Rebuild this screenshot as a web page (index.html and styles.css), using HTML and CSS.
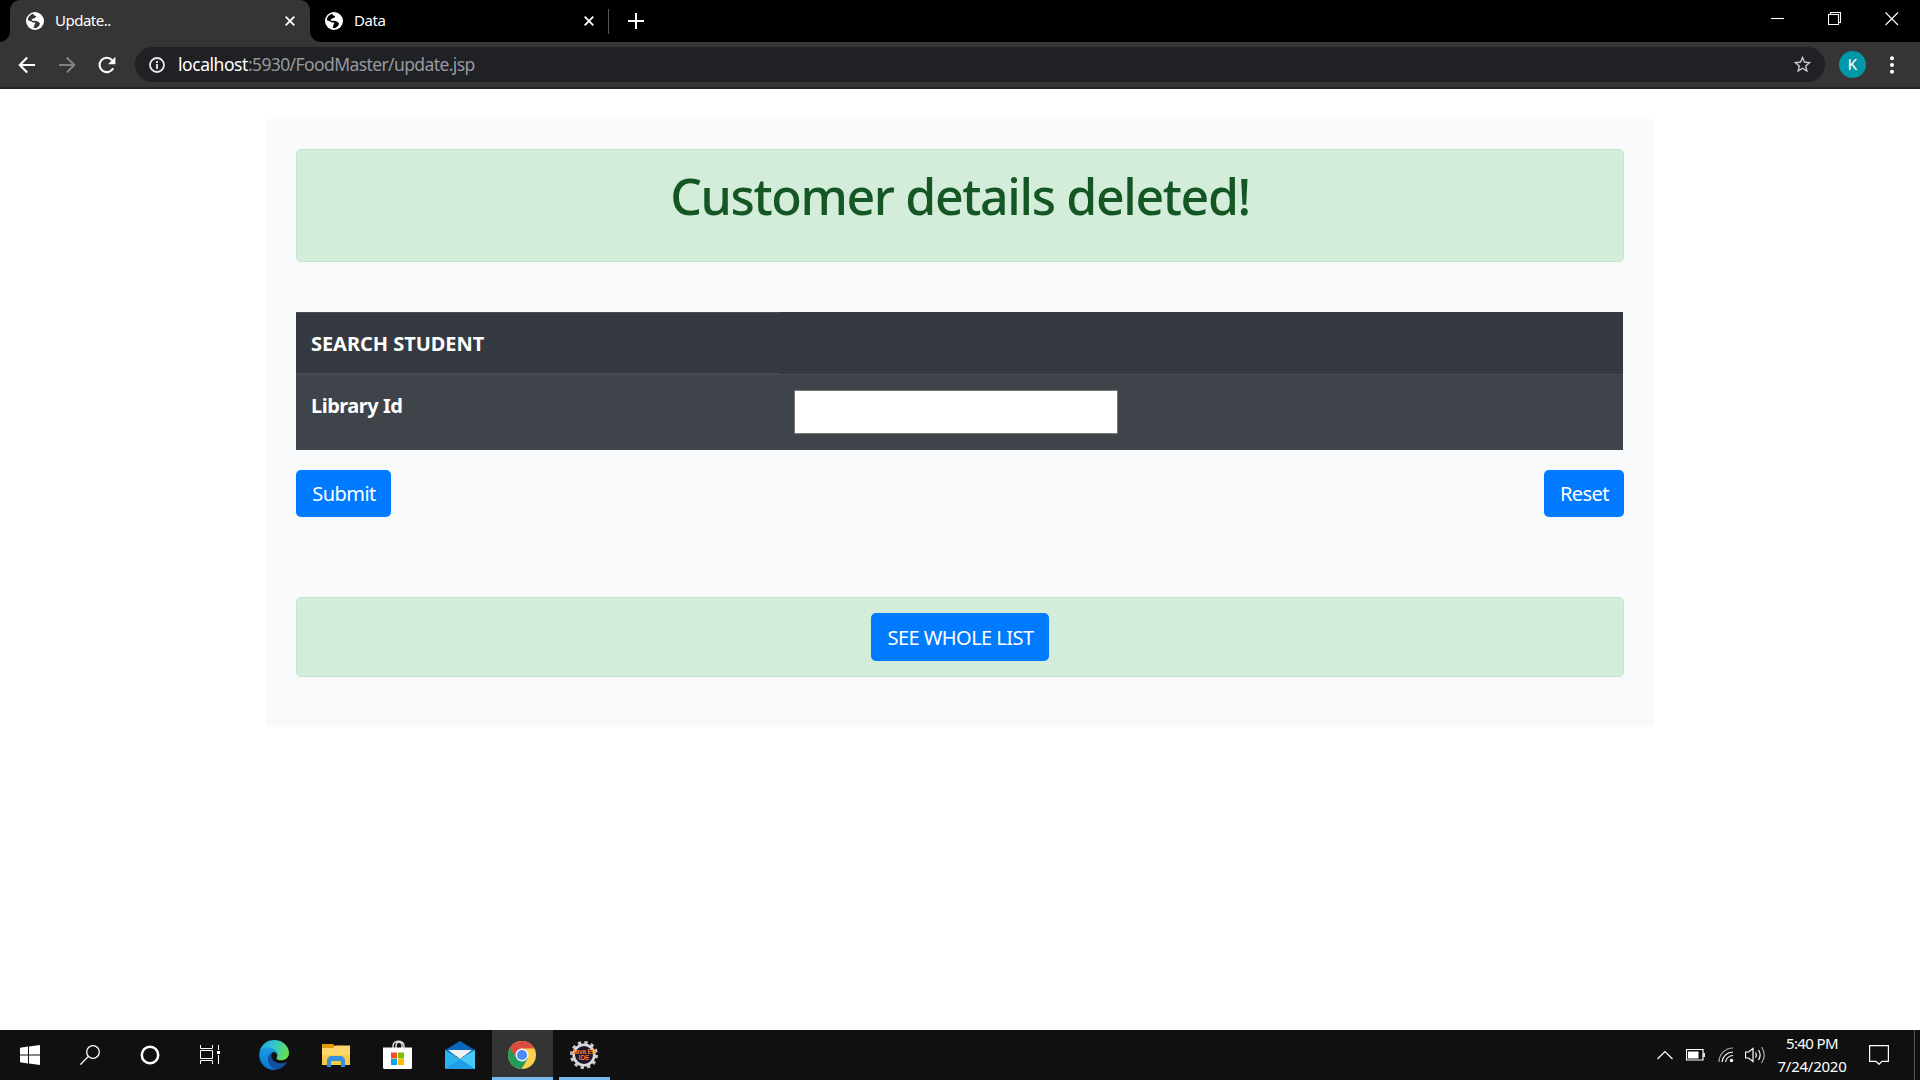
FILE: index.html
```html
<!DOCTYPE html>
<html lang="en">
<head>
<meta charset="utf-8">
<title>Update..</title>
<link rel="stylesheet" href="styles.css">
</head>
<body>
<header class="browser">
  <div class="tabs">
    <div class="tab tab-active">
      <svg class="globe" viewBox="0 0 18 18"><circle cx="9" cy="9" r="9" fill="#fff"/><path d="M7 1.8C4.2 2.6 1.9 5 1.8 8.3L5 9.2 6.8 10.4 9.5 10.5 8.6 12.6 7.6 16 10.4 16.1 13 14 14 11.5 12.4 9.8 9.4 8.7 7.2 9 5.4 8 6.6 6.7 9.4 5.8 10.2 4.2 8.4 3.4z" fill="#353535"/></svg>
      <span class="tab-title"><span class="t-update">Update..</span></span>
      <svg class="tab-close" viewBox="0 0 10 10"><path d="M.7.7l8.6 8.6M9.3.7L.7 9.3"/></svg>
    </div>
    <div class="tab tab-idle">
      <svg class="globe" viewBox="0 0 18 18"><circle cx="9" cy="9" r="9" fill="#fff"/><path d="M7 1.8C4.2 2.6 1.9 5 1.8 8.3L5 9.2 6.8 10.4 9.5 10.5 8.6 12.6 7.6 16 10.4 16.1 13 14 14 11.5 12.4 9.8 9.4 8.7 7.2 9 5.4 8 6.6 6.7 9.4 5.8 10.2 4.2 8.4 3.4z" fill="#000"/></svg>
      <span class="tab-title"><span class="t-data">Data</span></span>
      <svg class="tab-close" viewBox="0 0 10 10"><path d="M.7.7l8.6 8.6M9.3.7L.7 9.3"/></svg>
    </div>
    <svg class="new-tab" viewBox="0 0 16 16"><path d="M8 0v16M0 8h16"/></svg>
    <div class="window-controls">
      <svg viewBox="0 0 14 14"><path d="M0 6.5h13"/></svg>
      <svg viewBox="0 0 14 14"><path d="M.5 2.5h10v10H.5zM2.5 2.5v-2h10v10h-2"/></svg>
      <svg viewBox="0 0 14 14"><path d="M.5.5l12.5 12.5M13 .5L.5 13"/></svg>
    </div>
  </div>
  <div class="toolbar">
    <svg class="nav" viewBox="0 0 18 18"><path d="M17 9H2M9.2 1.6L1.8 9l7.4 7.4"/></svg>
    <svg class="nav nav-off" viewBox="0 0 18 18"><path d="M1 9h15M8.8 1.6L16.2 9l-7.4 7.4"/></svg>
    <svg class="nav" viewBox="0 0 18 18"><path d="M15.2 12.2A7.2 7.2 0 1 1 14.2 4.2"/><path d="M17.4.8v7.4H10z" fill="#fff" stroke="none"/></svg>
    <div class="omnibox">
      <svg class="info" viewBox="0 0 16 16"><circle cx="8" cy="8" r="7"/><path d="M8 7v5M8 4v1.9"/></svg>
      <span class="url"><b>localhost</b>:5930/FoodMaster/update.jsp</span>
      <svg class="star" viewBox="0 0 24 24"><path d="M22 9.24l-7.19-.62L12 2 9.19 8.63 2 9.24l5.46 4.73L5.82 21 12 17.27 18.18 21l-1.63-7.03L22 9.24zM12 15.4l-3.76 2.27 1-4.28-3.32-2.88 4.38-.38L12 6.1l1.71 4.04 4.38.38-3.32 2.88 1 4.28L12 15.4z"/></svg>
    </div>
    <span class="avatar">K</span>
    <svg class="dots" viewBox="0 0 4 18"><circle cx="2" cy="2.3" r="2"/><circle cx="2" cy="9" r="2"/><circle cx="2" cy="15.7" r="2"/></svg>
  </div>
</header>

<main class="page">
  <section class="panel">
    <div class="alert alert-message"><h1 class="heading">Customer details deleted!</h1></div>
    <form class="search">
      <table class="table">
        <thead><tr><th><span class="t-search">SEARCH STUDENT</span></th><td></td></tr></thead>
        <tbody><tr><th><span class="t-library">Library Id</span></th><td><input class="field" type="text"></td></tr></tbody>
      </table>
      <div class="actions">
        <button class="btn submit" type="button">Submit</button>
        <button class="btn reset" type="button">Reset</button>
      </div>
    </form>
    <div class="alert alert-list"><a class="btn whole">SEE WHOLE LIST</a></div>
  </section>
</main>

<footer class="taskbar">
  <div class="shell">
    <div class="task"><svg width="20" height="20" viewBox="0 0 20 20" fill="#fff"><path d="M0 2.8L8 1.6V9.4H0zM9 1.5L20 0V9.4H9zM0 10.4h8v8L0 17.2zM9 10.4h11V20L9 18.5z"/></svg></div>
    <div class="task"><svg width="20" height="20" viewBox="0 0 20 20" fill="none" stroke="#fff" stroke-width="1.3"><circle cx="13" cy="7" r="6.3"/><path d="M8.4 11.4L.4 19.6"/></svg></div>
    <div class="task"><svg width="20" height="20" viewBox="0 0 20 20" fill="none" stroke="#fff" stroke-width="2.5"><circle cx="10" cy="10" r="8.2"/></svg></div>
    <div class="task"><svg width="20" height="20" viewBox="0 0 20 20" fill="none" stroke="#fff"><path d="M.5 0v3.5h12V0M.5 5.5h12v8H.5zM.5 19v-3.5h12V19M18.5 0v5M18.5 10v9"/><path d="M17 6h3v3h-3z" fill="#fff" stroke="none"/></svg></div>
  </div>
  <div class="apps">
    <div class="task"><svg width="30" height="30" viewBox="0 0 30 30">
      <defs><linearGradient id="e1" x1="0" x2="1" y1=".2" y2=".5"><stop offset="0" stop-color="#1ca7e0"/><stop offset=".5" stop-color="#36c8c9"/><stop offset="1" stop-color="#67df4d"/></linearGradient><linearGradient id="e2" x1="0" x2="0" y1="0" y2="1"><stop offset="0" stop-color="#1b9de2"/><stop offset="1" stop-color="#0876cf"/></linearGradient></defs>
      <path d="M.5 12C2 4.5 8 0 15 0c9 0 15 6.2 15 13 0 4.5-3.5 7.3-7.5 7.3-3.2 0-5-1.2-5-2.1 0-.7.9-1.4.9-3.2C18.4 11.5 14 8 9 8 5 8 2 9.5.5 12z" fill="url(#e1)"/>
      <path d="M.2 14.5C.3 10 4.5 7.5 9 7.5c5 0 9.4 3.5 9.4 7.3-1-2-2.3-2.8-4-2.8-3.6 1.5-5.700 5-4.600 9.500 1 4 4.200 7 8.200 8.100C8.500 31.600.2 24.500.2 14.500z" fill="url(#e2)"/>
      <path d="M14 12c-3.800 1.500-5.800 5-4.700 9.500 1 4 4.700 7.300 8.700 8.100 4-.8 7.500-3.400 9.500-6.600.3-.7-.2-1-.8-.7-7 3-14.300-1-14.300-6.300 0-1.600.6-3 1.600-4z" fill="#11509f"/></svg></div>
    <div class="task task-files"><svg width="28" height="24" viewBox="0 0 28 24"><path d="M0 1h11l2 2v4H0z" fill="#dd9b08"/><path d="M0 5h11l2.500-2.500H28V22H0z" fill="#ffd768"/><path d="M0 12h28v10H0z" fill="#fbc949"/><path d="M5 24V16l3-3h12l3 3v8h-4v-6H9v6z" fill="#3991dd"/></svg></div>
    <div class="task task-store"><svg width="29" height="30" viewBox="0 0 29 30"><path d="M10 8V6c0-6.500 11-6.500 11 0v2M13 8V5.500c0-4.500 6-4.500 6 0V8" fill="none" stroke="#d8d8d8" stroke-width="1.500"/><path d="M0 7.500h29V28l-1 1H1l-1-1z" fill="#fff"/><path d="M8 12.500h6v6H8z" fill="#f25022"/><path d="M15 12.500h6v6h-6z" fill="#7fba00"/><path d="M8 19h6v6H8z" fill="#00a4ef"/><path d="M15 19h6v6h-6z" fill="#ffb900"/></svg></div>
    <div class="task"><svg width="30" height="28" viewBox="0 0 30 28"><path d="M0 9L15 0l15 9v6H0z" fill="#0867b9"/><path d="M0 9l15 9 15-9v19H0z" fill="#29b4ee"/><path d="M3 9h24l-12 9z" fill="#f2f2f2"/><path d="M30 9v19L15 18z" fill="#4bc9f5"/><path d="M0 28L15 18l15 10z" fill="#209eea"/></svg></div>
    <div class="task task-current"><svg width="28" height="28" viewBox="0 0 28 28"><circle cx="14" cy="14" r="14" fill="#ffd04b"/><path d="M14 14L1.900 7A14 14 0 0 0 13.500 28l6.300-10.500z" fill="#229b5b"/><path d="M1.900 7A14 14 0 0 1 26.300 7.500H14a6.500 6.500 0 0 0-6 8.500z" fill="#dc4c3e"/><circle cx="14" cy="14" r="6.500" fill="#f5f5f5"/><circle cx="14" cy="14" r="5.100" fill="#4f8bf5"/></svg></div>
    <div class="task task-open"><svg width="30" height="28" viewBox="-15 -14 30 28"><circle r="12.500" fill="none" stroke="#c9c9c9" stroke-width="3" stroke-dasharray="3.300 3.245"/><circle r="10.300" fill="#1b1730" stroke="#dadada" stroke-width="2.600"/><g font-family="Liberation Sans" font-size="6.500" font-weight="700" fill="#ef7d19" text-anchor="middle"><text y="-1" textLength="24">Java EE</text><text y="5.200">IDE</text></g></svg></div>
  </div>
  <div class="tray">
    <svg width="16" height="10" viewBox="0 0 16 10"><path d="M.5 9L8 1.500 15.500 9"/></svg>
    <svg width="19" height="12" viewBox="0 0 19 12"><path d="M.5.5h16.500v10.500H.5zM18.300 4v4"/><path d="M2 2.500h10.500v7H2z" fill="#fff" stroke="none"/></svg>
    <svg width="16" height="16" viewBox="0 0 16 16"><path d="M1 15A14 14 0 0 1 15 1" opacity=".65"/><path d="M4 15A11 11 0 0 1 15 5M7.500 15A8 8 0 0 1 15 8.500"/><circle cx="13.500" cy="13.500" r="1.700" fill="#fff" stroke="none"/></svg>
    <svg width="21" height="18" viewBox="0 0 21 18"><path d="M.5 6h3L8 2.500v13L3.500 12h-3zM10.500 6.500q1.600 2.500 0 5M13.500 4q3.300 5 0 10"/><path d="M16.500 1q5.500 8 0 16" opacity=".65"/></svg>
    <div class="clock"><span class="t-time">5:40 PM</span><span class="t-date">7/24/2020</span></div>
    <svg class="notice" width="20" height="20" viewBox="0 0 20 20"><path d="M.6.6h18.800v15.800h-6.400L10 19.300l-3-2.900H.6z"/></svg>
    <div class="show-desktop"></div>
  </div>
</footer>
</body>
</html>
```
FILE: styles.css
```css
* { box-sizing: border-box; }
html, body { margin: 0; height: 100%; overflow: hidden; }
body {
  display: flex;
  flex-direction: column;
  width: 1920px;
  height: 1080px;
  background: #fff;
  font-family: "Noto Sans", "Open Sans", sans-serif;
}
svg { display: block; flex: none; }

.browser { height: 89px; border-bottom: 2px solid #252525; background: #353535; }
.tabs { display: flex; align-items: center; height: 42px; padding-left: 10px; background: #000; }
.tab { display: flex; align-items: center; height: 42px; color: #fff; font-size: 15px; }
.tab-active { position: relative; width: 300px; padding: 0 15px; background: #353535; border-radius: 10px 10px 0 0; }
.tab-active::before, .tab-active::after { content: ""; position: absolute; bottom: 0; width: 10px; height: 10px; }
.tab-active::before { left: -10px; background: radial-gradient(circle at 0 0, transparent 9.5px, #353535 10px); }
.tab-active::after { right: -10px; background: radial-gradient(circle at 100% 0, transparent 9.5px, #353535 10px); }
.tab-idle { width: 299px; padding: 0 15px 0 14px; background: linear-gradient(#555, #555) right center / 1px 25px no-repeat; }
.globe { width: 18px; height: 18px; margin-left: 1px; margin-right: 11px; }
.tab-title { flex: 1; padding-bottom: 2px; line-height: 20px; white-space: nowrap; }
.t-update { letter-spacing: -0.5px; }
.t-data { letter-spacing: -0.4px; }
.tab-close { width: 10px; height: 10px; stroke: #fff; stroke-width: 1.8; }
.new-tab { width: 16px; height: 16px; margin-left: 19px; stroke: #fff; stroke-width: 2; fill: none; }
.window-controls { display: flex; gap: 43px; margin-left: auto; margin-right: 21px; padding-bottom: 5px; }
.window-controls svg { width: 14px; height: 14px; fill: none; stroke: #fff; stroke-width: 1.1; }

.toolbar { display: flex; align-items: center; height: 45px; padding-left: 18px; }
.nav { width: 18px; height: 18px; margin-right: 22px; fill: none; stroke: #fff; stroke-width: 2.1; }
.nav-off { stroke: #818181; }
.omnibox { display: flex; align-items: center; width: 1690px; height: 35px; margin-left: -3px; padding: 0 12px 0 14px; border-radius: 18px; background: #202124; }
.info { width: 16px; height: 16px; fill: none; stroke: #e8eaed; stroke-width: 1.8; }
.url { flex: 1; margin-left: 13px; padding-bottom: 1px; color: #969a9f; font-size: 17.5px; line-height: 24px; letter-spacing: -0.6px; white-space: nowrap; }
.url b { color: #fff; font-weight: 400; letter-spacing: -0.45px; }
.star { width: 21px; height: 21px; fill: #c7c9cc; }
.avatar { width: 27px; height: 27px; margin-left: 14px; border-radius: 50%; background: #0097a7; color: #fff; font: 15px/28px Roboto, sans-serif; text-align: center; }
.dots { width: 4px; height: 18px; margin-left: 24px; fill: #fff; }

.page { flex: 1; padding-top: 30px; }
.panel { width: 1388px; height: 608px; margin: 0 auto; padding: 30px; border-radius: 5px; background: #f8f9fb; }
.alert { border: 1px solid #c3e6cb; border-radius: 5px; background: #d4edda; color: #155724; text-align: center; }
.alert-message { height: 113px; padding-top: 16px; }
.heading { margin: 0; font-size: 50px; font-weight: 500; line-height: 60px; letter-spacing: -1.35px; white-space: nowrap; }
.search { margin: 50px 0 80px; }
.table { width: 1327px; border-collapse: collapse; background: #343a40; color: #fff; table-layout: fixed; }
.table th { width: 483px; padding: 16px 15px 14px; border-top: 1px solid #454d55; font-size: 20px; line-height: 30px; text-align: left; vertical-align: top; }
.table thead th { box-shadow: inset 0 -1px #454d55; }
.table thead td { padding: 0; }
.table thead tr { height: 62px; }
.table tbody tr { height: 75px; background: #3e444a; border-top: 1px solid #454d55; }
.table tbody td { padding: 15px; vertical-align: top; }
.t-search { letter-spacing: -0.05px; }
.t-library { letter-spacing: -0.5px; }
.field { display: block; width: 324px; height: 44px; padding: 1px 2px; border: 1px solid #767676; background: #fff; }
.actions { display: flex; justify-content: space-between; margin-top: 20px; }
.btn { display: flex; align-items: center; justify-content: center; height: 47px; padding: 2px 0 0 1px; border: 0; border-radius: 5px; background: #007bff; color: #fff; font: 20px/30px "Noto Sans", "Open Sans", sans-serif; letter-spacing: -0.55px; white-space: nowrap; }
.submit { width: 95px; }
.reset { width: 80px; }
.whole { width: 178px; height: 48px; }
.alert-list { display: flex; align-items: center; justify-content: center; height: 80px; }

.taskbar { display: flex; height: 50px; background: #101010; }
.shell, .apps, .tray { display: flex; align-items: center; }
.task { display: flex; align-items: center; justify-content: center; height: 50px; }
.shell .task { width: 60px; }
.apps { margin-left: 3px; }
.apps .task { width: 62px; }
.apps .task-files { padding-right: 1px; }
.apps .task-store { padding-right: 2px; }
.apps .task-current { width: 61px; margin-right: 1px; margin-left: 1px; padding-right: 2px; background: #343434; box-shadow: inset 0 -3px #76b9ed; }
.apps .task-open { width: 60px; background: linear-gradient(#76b9ed, #76b9ed) 5px bottom / 51px 3px no-repeat; }
.tray { margin-left: auto; fill: none; stroke: #fff; stroke-width: 1.2; }
.tray svg { margin-right: 13px; }
.tray svg:nth-child(3) { margin-right: 11px; }
.tray svg:nth-child(4) { margin-right: 11px; }
.clock { display: flex; flex-direction: column; align-items: center; width: 70px; margin-right: 22px; color: #fff; font-size: 15px; line-height: 23px; white-space: nowrap; }
.t-time { letter-spacing: -0.6px; }
.t-date { letter-spacing: -0.25px; }
.tray .notice { margin-right: 25px; }
.show-desktop { width: 6px; height: 50px; border-left: 1px solid #555; }
```
